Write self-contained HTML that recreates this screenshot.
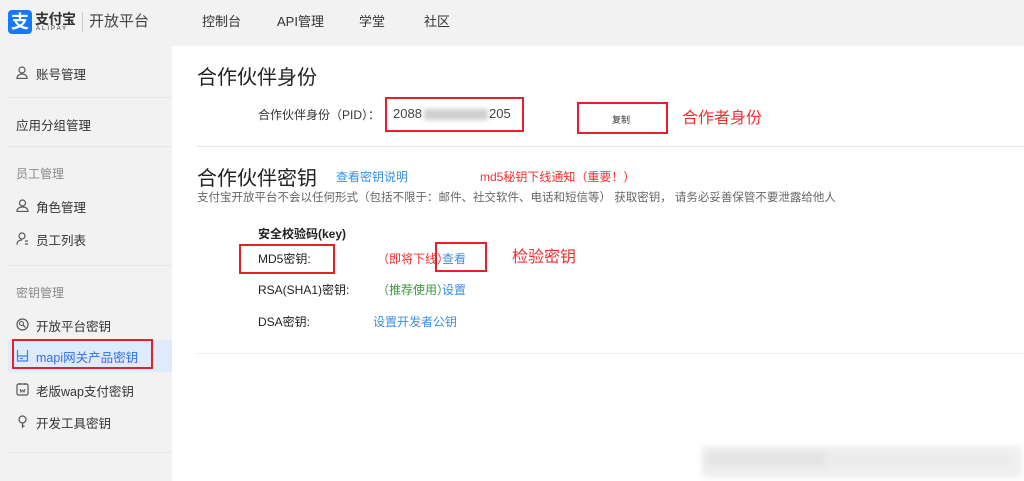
<!DOCTYPE html>
<html><head><meta charset="utf-8">
<style>
*{margin:0;padding:0;box-sizing:border-box}
body{width:1024px;height:481px;overflow:hidden;background:#f2f2f2;font-family:"Liberation Sans","Noto Sans CJK SC",sans-serif;color:#333;position:relative}
.a{position:absolute;white-space:nowrap}
.nav{font-size:13px;color:#333;top:11px}
.side{font-size:12.5px;color:#333}
.gray{color:#888}
.main{position:absolute;left:172px;top:46px;width:852px;height:435px;background:#fff}
.hr{position:absolute;height:1px;background:#e8e8e8}
.rb{position:absolute;border:2px solid #e5202a}
.link{color:#3a8ee6}
.red{color:#f03030}
svg{position:absolute}
</style></head><body>
<div class="a" style="left:8px;top:10px;width:24px;height:24px;background:#1677ff;border-radius:4px;color:#fff;font-size:18px;line-height:24px;text-align:center;font-weight:bold">支</div>
<div class="a" style="left:35px;top:9px;font-size:14px;font-weight:bold;color:#333;letter-spacing:-0.5px">支付宝</div>
<div class="a" style="left:36px;top:26px;font-size:6px;color:#333;letter-spacing:2px">ALIPAY</div>
<div class="a" style="left:82px;top:12px;width:1px;height:20px;background:#ccc"></div>
<div class="a" style="left:89px;top:10px;font-size:15px;color:#444">开放平台</div>
<div class="a nav" style="left:202px">控制台</div>
<div class="a nav" style="left:277px">API管理</div>
<div class="a nav" style="left:359px">学堂</div>
<div class="a nav" style="left:424px">社区</div>

<svg style="left:16px;top:66px" width="12" height="13" viewBox="0 0 12 13"><circle cx="6" cy="4" r="3" fill="none" stroke="#555" stroke-width="1.2"/><path d="M1 12.5c0-3 2.2-4.5 5-4.5s5 1.5 5 4.5z" fill="none" stroke="#555" stroke-width="1.2"/></svg>
<div class="a side" style="left:36px;top:64px">账号管理</div>
<div class="hr" style="left:8px;top:97px;width:164px;background:#e6e6e6"></div>
<div class="a side" style="left:16px;top:115px">应用分组管理</div>
<div class="hr" style="left:8px;top:146px;width:164px;background:#e6e6e6"></div>
<div class="a side gray" style="left:16px;top:165px;font-size:12px">员工管理</div>
<svg style="left:16px;top:199px" width="13" height="13" viewBox="0 0 13 13"><circle cx="6.5" cy="4" r="3" fill="none" stroke="#555" stroke-width="1.2"/><path d="M1 12.5c0-3 2.4-4.5 5.5-4.5s5.5 1.5 5.5 4.5z" fill="none" stroke="#555" stroke-width="1.2"/></svg>
<div class="a side" style="left:36px;top:197px">角色管理</div>
<svg style="left:16px;top:232px" width="13" height="13" viewBox="0 0 13 13"><circle cx="6" cy="4" r="3" fill="none" stroke="#555" stroke-width="1.2"/><path d="M1 12.5c0-3 2.2-4.5 5-4.5M9 9h3M9 12h3" fill="none" stroke="#555" stroke-width="1.2"/></svg>
<div class="a side" style="left:36px;top:230px">员工列表</div>
<div class="hr" style="left:8px;top:265px;width:164px;background:#e6e6e6"></div>
<div class="a side gray" style="left:16px;top:284px;font-size:12px">密钥管理</div>
<svg style="left:16px;top:318px" width="13" height="13" viewBox="0 0 13 13"><circle cx="6.5" cy="6.5" r="5.5" fill="none" stroke="#555" stroke-width="1.2"/><circle cx="5.5" cy="5.5" r="2" fill="none" stroke="#555" stroke-width="1.1"/><path d="M7 7l2.5 2.5" stroke="#555" stroke-width="1.2"/></svg>
<div class="a side" style="left:36px;top:316px">开放平台密钥</div>
<div class="a" style="left:8px;top:340px;width:164px;height:32px;background:#ddebfc"></div>
<div class="rb" style="left:12px;top:339px;width:141px;height:30px"></div>
<svg style="left:16px;top:349px" width="13" height="13" viewBox="0 0 13 13"><path d="M1.5 1v11h10V1M1.5 7h10M4 9.5h3" fill="none" stroke="#3a7ff6" stroke-width="1.2"/></svg>
<div class="a side" style="left:36px;top:347px;color:#2f6ff0">mapi网关产品密钥</div>
<svg style="left:16px;top:382px" width="13" height="14" viewBox="0 0 13 14"><rect x="1" y="2" width="11" height="11" rx="1.5" fill="none" stroke="#555" stroke-width="1.2"/><path d="M4 1v2M9 1v2M4 7l1 3 1.5-2 1.5 2 1-3" fill="none" stroke="#555" stroke-width="1"/></svg>
<div class="a side" style="left:36px;top:381px">老版wap支付密钥</div>
<svg style="left:17px;top:415px" width="11" height="14" viewBox="0 0 11 14"><circle cx="5.5" cy="4.5" r="3.5" fill="none" stroke="#555" stroke-width="1.2"/><path d="M5.5 8v5M5.5 11h2" stroke="#555" stroke-width="1.2"/></svg>
<div class="a side" style="left:36px;top:413px">开发工具密钥</div>
<div class="hr" style="left:8px;top:452px;width:164px;background:#e6e6e6"></div>

<div class="main"></div>
<div class="a" style="left:197px;top:61px;font-size:20px;color:#222">合作伙伴身份</div>
<div class="a" style="left:258px;top:106px;font-size:12px;color:#333">合作伙伴身份（PID）：</div>
<div class="rb" style="left:385px;top:97px;width:139px;height:35px"></div>
<div class="a" style="left:393px;top:106px;font-size:13px;color:#444">2088</div>
<div class="a" style="left:424px;top:109px;width:64px;height:11px;background:#cfcfcf;filter:blur(2.5px)"></div>
<div class="a" style="left:489px;top:106px;font-size:13px;color:#444">205</div>
<div class="rb" style="left:577px;top:102px;width:91px;height:32px"></div>
<div class="a" style="left:612px;top:113px;font-size:9px;color:#333">复制</div>
<div class="a red" style="left:682px;top:104px;font-size:16px">合作者身份</div>
<div class="hr" style="left:197px;top:146px;width:827px"></div>

<div class="a" style="left:197px;top:162px;font-size:20px;color:#222">合作伙伴密钥</div>
<div class="a link" style="left:336px;top:168px;font-size:12px">查看密钥说明</div>
<div class="a red" style="left:480px;top:168px;font-size:12px">md5秘钥下线通知（重要！）</div>
<div class="a" style="left:197px;top:189px;font-size:11.5px;color:#666">支付宝开放平台不会以任何形式（包括不限于：邮件、社交软件、电话和短信等） 获取密钥， 请务必妥善保管不要泄露给他人</div>

<div class="a" style="left:258px;top:225px;font-size:12px;font-weight:bold;color:#222">安全校验码(key)</div>
<div class="rb" style="left:239px;top:244px;width:96px;height:30px"></div>
<div class="a" style="left:258px;top:250px;font-size:12px;color:#222">MD5密钥:</div>
<div class="a red" style="left:377px;top:250px;font-size:12px">（即将下线）</div>
<div class="rb" style="left:435px;top:242px;width:52px;height:30px"></div>
<div class="a link" style="left:442px;top:250px;font-size:12px">查看</div>
<div class="a red" style="left:512px;top:243px;font-size:16px">检验密钥</div>
<div class="a" style="left:258px;top:281px;font-size:12px;color:#222">RSA(SHA1)密钥:</div>
<div class="a" style="left:377px;top:281px;font-size:12px;color:#3a9a3a">（推荐使用）</div>
<div class="a link" style="left:442px;top:281px;font-size:12px">设置</div>
<div class="a" style="left:258px;top:313px;font-size:12px;color:#222">DSA密钥:</div>
<div class="a link" style="left:373px;top:313px;font-size:12px">设置开发者公钥</div>
<div class="hr" style="left:197px;top:353px;width:827px;background:#ececec"></div>

<div class="a" style="left:702px;top:446px;width:320px;height:32px;background:#f0f0f0;filter:blur(3px)"></div>
<div class="a" style="left:706px;top:452px;width:120px;height:14px;background:#e2e2e2;filter:blur(4px)"></div>
<div class="a" style="left:830px;top:456px;width:180px;height:8px;background:#e8e8e8;filter:blur(4px)"></div>
</body></html>
